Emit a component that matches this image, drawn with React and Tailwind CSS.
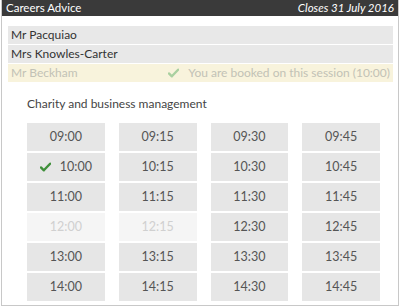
const slots = [
  ["09:00", "09:15", "09:30", "09:45"],
  ["10:00", "10:15", "10:30", "10:45"],
  ["11:00", "11:15", "11:30", "11:45"],
  ["12:00", "12:15", "12:30", "12:45"],
  ["13:00", "13:15", "13:30", "13:45"],
  ["14:00", "14:15", "14:30", "14:45"],
];

const disabled = ["12:00", "12:15"];

function Tick({ className }) {
  return (
    <svg viewBox="0 0 12 10" className={className}>
      <path d="M1 5.5 L4.2 8.6 L11 1.4" fill="none" stroke="currentColor" strokeWidth="2.6" strokeLinecap="round" strokeLinejoin="round" />
    </svg>
  );
}

export default function App() {
  return (
    <div className="w-[400px] h-[307px] bg-white" style={{ fontFamily: "Lato, sans-serif" }}>
      <div className="mx-[1px] h-[306px] border-x border-b border-[#c8c8c8] flex flex-col">
        <div className="h-[16px] bg-[#3a3a3a] flex items-center justify-between px-[4px] text-white text-[11.5px] leading-none">
          <span>Careers Advice</span>
          <span className="italic">Closes 31 July 2016</span>
        </div>

        <div className="mt-[10px] mx-[6px] mr-[5px] flex flex-col text-[12px]">
          <div className="h-[18px] bg-[#e8e8e8] flex items-center px-[3px] text-[#333]">Mr Pacquiao</div>
          <div className="h-[19px] bg-[#e8e8e8] flex items-center px-[3px] text-[#333] border-t border-white">Mrs Knowles-Carter</div>
          <div className="h-[19px] bg-[#f8f3dc] flex items-center justify-between px-[3px] text-[#c2c2b6] border-t border-white">
            <span>Mr Beckham</span>
            <span className="flex items-center gap-[9px]">
              <Tick className="w-[11px] h-[10px] text-[#a9d0a0]" />
              You are booked on this session (10:00)
            </span>
          </div>
        </div>

        <div className="ml-[25px] mt-[13px] text-[12px] text-[#444]">Charity and business management</div>

        <div className="ml-[25px] mr-[18px] mt-[10px] grid grid-cols-4 gap-x-[14px] gap-y-[2px]">
          {slots.flat().map((t) => {
            const off = disabled.includes(t);
            return (
              <div
                key={t}
                className={`h-[28px] flex items-center justify-center text-[12.5px] ${
                  off ? "bg-[#f5f5f5] text-[#d0d0d0]" : "bg-[#e6e6e6] text-[#555]"
                }`}
              >
                {t === "10:00" && <Tick className="w-[11px] h-[10px] text-[#3f8f3a] mr-[9px]" />}
                {t}
              </div>
            );
          })}
        </div>
      </div>
    </div>
  );
}
